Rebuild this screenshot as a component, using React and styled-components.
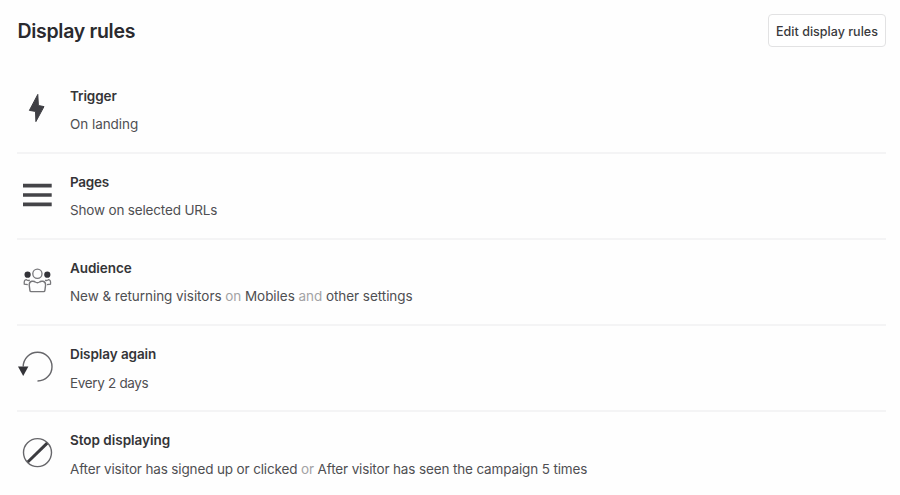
import React from "react";
import styled, { createGlobalStyle } from "styled-components";

const BoltIcon = () => (
  <svg width="40" height="40" viewBox="0 0 40 40">
    <path
      d="M20.8 6.4 L12.4 22.4 L18.5 23.4 L18.9 33.6 L27 18.6 L21.4 17.5 Z"
      fill="#3f3f44"
      stroke="#3f3f44"
      strokeWidth="1"
      strokeLinejoin="round"
    />
  </svg>
);

const PagesIcon = () => (
  <svg width="40" height="40" viewBox="0 0 40 40">
    <path
      d="M6 11.7 H34.7 M6 21 H34.7 M6 30.3 H34.7"
      stroke="#444448"
      strokeWidth="3.7"
    />
  </svg>
);

const AudienceIcon = () => (
  <svg width="40" height="40" viewBox="0 0 40 40" fill="none" stroke="#77777a">
    <circle cx="20.4" cy="13.8" r="4.6" strokeWidth="1.3" />
    <circle cx="10.6" cy="14.7" r="3.1" fill="#333338" stroke="none" />
    <circle cx="30.3" cy="14.7" r="3.1" fill="#333338" stroke="none" />
    <path
      d="M14.8 21.3 Q17.5 21 18.2 22 Q20.4 23.4 22.6 22 Q23.3 21 26 21.3 Q28.6 21.7 28.6 25 L27.9 30.4 Q27.8 31.6 26.6 31.6 H14.2 Q13 31.6 12.9 30.4 L12.2 25 Q12.2 21.7 14.8 21.3 Z"
      strokeWidth="1.4"
    />
    <path
      d="M10.8 24.6 L7.3 24.2 Q6.7 20 9.3 19.6 Q10.7 21 12.8 20.2 M30 24.6 L33.5 24.2 Q34.1 20 31.5 19.6 Q30.1 21 28 20.2"
      strokeWidth="1.3"
    />
  </svg>
);

const AgainIcon = () => (
  <svg width="40" height="40" viewBox="0 -0.4 40 40">
    <path
      d="M6.2 20.2 A14.4 14.4 0 1 1 20.5 34.6"
      fill="none"
      stroke="#66666a"
      strokeWidth="1.4"
    />
    <path d="M1 20 H11.4 L6.2 29.6 Z" fill="#333338" />
  </svg>
);

const StopIcon = () => (
  <svg width="40" height="40" viewBox="0 -0.4 40 40" fill="none">
    <circle cx="20.5" cy="20.2" r="14" stroke="#66666a" strokeWidth="1.4" />
    <path d="M10.8 29.6 L30.2 10.8" stroke="#3c3c40" strokeWidth="3" />
  </svg>
);

const rules = [
  {
    title: "Trigger",
    titleSpacing: "-0.1px",
    textSpacing: "-0.06px",
    icon: <BoltIcon />,
    parts: [{ text: "On landing" }],
  },
  {
    title: "Pages",
    titleSpacing: "-0.25px",
    textSpacing: "-0.17px",
    icon: <PagesIcon />,
    parts: [{ text: "Show on selected URLs" }],
  },
  {
    title: "Audience",
    titleSpacing: "-0.05px",
    textSpacing: "-0.05px",
    icon: <AudienceIcon />,
    parts: [
      { text: "New & returning visitors" },
      { text: " on ", muted: true },
      { text: "Mobiles" },
      { text: " and ", muted: true },
      { text: "other settings" },
    ],
  },
  {
    title: "Display again",
    titleSpacing: "-0.08px",
    textSpacing: "-0.33px",
    icon: <AgainIcon />,
    parts: [{ text: "Every 2 days" }],
  },
  {
    title: "Stop displaying",
    titleSpacing: "-0.02px",
    textSpacing: "-0.14px",
    icon: <StopIcon />,
    parts: [
      { text: "After visitor has signed up or clicked" },
      { text: " or ", muted: true },
      { text: "After visitor has seen the campaign 5 times" },
    ],
  },
];

const App = () => {
  return (
    <Panel>
      <GlobalStyle />
      <Header>
        <Heading>Display rules</Heading>
        <EditButton>Edit display rules</EditButton>
      </Header>
      <RuleList>
        {rules.map((rule) => (
          <Rule key={rule.title}>
            <IconCell>{rule.icon}</IconCell>
            <div>
              <RuleTitle $spacing={rule.titleSpacing}>{rule.title}</RuleTitle>
              <RuleText $spacing={rule.textSpacing}>
                {rule.parts.map((part, i) => (
                  <Part key={i} $muted={part.muted}>
                    {part.text}
                  </Part>
                ))}
              </RuleText>
            </div>
          </Rule>
        ))}
      </RuleList>
    </Panel>
  );
};

export default App;

const GlobalStyle = createGlobalStyle`
  body {
    margin: 0;
    background: #fefefe;
    font-family: Inter, "Liberation Sans", sans-serif;
    overflow: hidden;
  }
`;

const Panel = styled.div`
  box-sizing: border-box;
  height: 495px;
  padding: 14px 14px 0 17px;
`;

const Header = styled.div`
  display: flex;
  justify-content: space-between;
  align-items: flex-start;
  height: 54px;
`;

const Heading = styled.h2`
  margin: 0;
  padding: 3px 0 0 0.5px;
  color: #2a2a2e;
  font-size: 19.5px;
  font-weight: 600;
  line-height: 28px;
  letter-spacing: -0.3px;
`;

const EditButton = styled.button`
  box-sizing: border-box;
  width: 118px;
  height: 33px;
  padding: 1px 0 0;
  border: 1.5px solid #e2e2e3;
  border-radius: 4px;
  background: #fff;
  color: #39393c;
  font-family: inherit;
  font-size: 12.5px;
  font-weight: 550;
  letter-spacing: 0.02px;
  white-space: nowrap;
`;

const RuleList = styled.ul`
  margin: 0;
  padding: 0;
  list-style: none;
`;

const Rule = styled.li`
  box-sizing: border-box;
  display: flex;
  height: 86.1px;
  padding-top: 18px;
  border-bottom: 2px solid #f4f4f5;

  &:last-child {
    border-bottom: none;
  }
`;

const IconCell = styled.div`
  width: 53px;
  height: 40px;
  padding-top: 2px;
`;

const RuleTitle = styled.div`
  color: #343437;
  font-size: 13.5px;
  font-weight: 600;
  line-height: 20px;
  letter-spacing: ${(props) => props.$spacing};
`;

const RuleText = styled.div`
  margin-top: 8.25px;
  color: #4f4f52;
  font-size: 13.5px;
  line-height: 20px;
  white-space: pre;
  letter-spacing: ${(props) => props.$spacing};
`;

const Part = styled.span`
  color: ${(props) => (props.$muted ? "#a3a3a5" : "inherit")};
`;
